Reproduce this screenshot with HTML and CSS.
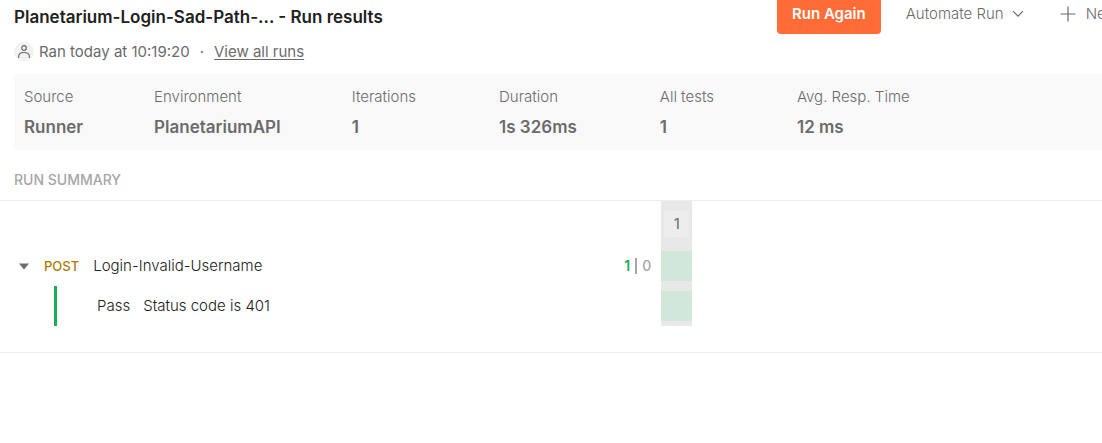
FILE: index.html
```html
<!DOCTYPE html>
<html lang="en">
<head>
<meta charset="utf-8">
<meta name="viewport" content="width=device-width, initial-scale=1">
<title>Run results</title>
<link rel="stylesheet" href="styles.css">
</head>
<body>
<header class="header">
  <h1 class="title">Planetarium-Login-Sad-Path-... - Run results</h1>
  <div class="actions">
    <button class="btn btn-primary" type="button">Run Again</button>
    <button class="btn btn-automate" type="button">Automate Run
      <svg width="12" height="8" viewBox="0 0 12 8" fill="none" stroke="currentColor" stroke-width="1.2" aria-hidden="true"><path d="M1 1.2l5 5 5-5"/></svg>
    </button>
    <button class="btn btn-new" type="button">
      <svg width="16" height="16" viewBox="0 0 16 16" fill="none" stroke="currentColor" stroke-width="1.2" aria-hidden="true"><path d="M8 .5v15M.5 8h15"/></svg>
      New Run
    </button>
  </div>
</header>

<div class="meta">
  <span class="avatar">
    <svg width="14" height="16" viewBox="0 0 14 16" fill="none" stroke="currentColor" stroke-width="1.2" aria-hidden="true"><circle cx="7" cy="4" r="2.3"/><path d="M1.600 14v-1.200c0-2.900 2-4.300 5.400-4.300s5.400 1.400 5.400 4.300v1.200"/></svg>
  </span>
  <span>Ran today at 10:19:20</span>
  <span class="dot">·</span>
  <a class="link" href="#runs">View all runs</a>
</div>

<dl class="stats">
  <div class="stat stat-text"><dt>Source</dt><dd>Runner</dd></div>
  <div class="stat stat-text"><dt>Environment</dt><dd>PlanetariumAPI</dd></div>
  <div class="stat"><dt>Iterations</dt><dd>1</dd></div>
  <div class="stat"><dt>Duration</dt><dd>1s 326ms</dd></div>
  <div class="stat"><dt>All tests</dt><dd>1</dd></div>
  <div class="stat"><dt>Avg. Resp. Time</dt><dd>12 ms</dd></div>
</dl>

<h2 class="section-title">RUN SUMMARY</h2>

<main class="summary">
  <div class="requests">
    <div class="request">
      <button class="toggle" type="button" aria-label="Collapse request" aria-expanded="true">
        <svg width="10" height="7" viewBox="0 0 10 7" fill="currentColor" aria-hidden="true"><path d="M0 .5h10L5 6.500z"/></svg>
      </button>
      <span class="method">POST</span>
      <span class="name">Login-Invalid-Username</span>
      <span class="counts"><span class="passed">1</span><span class="divider"></span><span>0</span></span>
    </div>
    <div class="test"><span>Pass</span><span>Status code is 401</span></div>
  </div>
  <div class="iteration">
    <div class="iteration-head"><button class="iteration-number" type="button">1</button></div>
    <div class="cell"></div>
    <div class="cell"></div>
  </div>
</main>
</body>
</html>
```
FILE: styles.css
```css
* {
  box-sizing: border-box;
}

body {
  margin: 0;
  overflow-x: hidden;
  background: #fff;
  color: #6b6b6b;
  font: 300 15px/20px Inter, "Liberation Sans", sans-serif;
}

button {
  padding: 0;
  border: 0;
  background: none;
  color: inherit;
  font: inherit;
}

.header {
  display: flex;
  justify-content: space-between;
  height: 34px;
  padding-left: 14px;
  overflow: hidden;
}

.title {
  margin: 0;
  padding-top: 7px;
  color: #212121;
  font-size: 17px;
  font-weight: 600;
  line-height: 20px;
  white-space: nowrap;
}

.actions {
  display: flex;
  flex: 0 0 325px;
  min-width: 0;
}

.btn {
  display: flex;
  flex: none;
  align-items: center;
  padding-bottom: 6px;
  white-space: nowrap;
}

.btn-primary {
  padding: 0 15px 6px;
  border-radius: 0 0 4px 4px;
  background: #ff6c37;
  color: #fff;
  font-weight: 600;
}

.btn-automate {
  gap: 8px;
  margin-left: 25px;
}

.btn-new {
  gap: 10px;
  margin-left: 36px;
}

.meta {
  display: flex;
  align-items: center;
  height: 36px;
  padding: 0 14px;
  font-weight: 400;
}

.avatar {
  display: flex;
  align-items: center;
  justify-content: center;
  width: 20px;
  height: 20px;
  margin-right: 5px;
  border-radius: 50%;
  background: #f2f2f2;
}

.dot {
  margin: 0 10px;
}

.link {
  color: inherit;
  text-underline-offset: 2px;
}

.stats {
  display: flex;
  gap: 83px;
  margin: 4px 0 0 14px;
  padding: 12px 10px 11px;
  background: #f9f9f9;
  white-space: nowrap;
}

.stat-text {
  margin-right: -12px;
}

.stats dt {
  line-height: 22px;
}

.stats dd {
  margin: 7px 0 0;
  font-size: 17px;
  font-weight: 600;
  line-height: 24px;
}

.section-title {
  margin: 0;
  padding: 20px 14px 10px;
  color: #a6a6a6;
  font-size: 14px;
  font-weight: 500;
  line-height: 20px;
}

.summary {
  display: flex;
  padding-bottom: 26px;
  border: solid #ededed;
  border-width: 1px 0;
}

.requests {
  flex: 0 0 60%;
  padding-top: 45px;
  color: #212121;
}

.request {
  display: flex;
  align-items: center;
  height: 40px;
  padding: 0 10px 0 19px;
}

.toggle {
  display: flex;
  color: #6b6b6b;
}

.method {
  margin: 0 14px 0 15px;
  color: #ad7a03;
  font-size: 13px;
  font-weight: 500;
}

.counts {
  display: flex;
  align-items: center;
  gap: 5px;
  margin-left: auto;
  color: #a6a6a6;
  font-size: 14px;
  font-weight: 500;
}

.passed {
  color: #1bac55;
  font-weight: 600;
}

.divider {
  width: 2px;
  height: 16px;
  background: #a6a6a6;
}

.test {
  display: flex;
  align-items: center;
  gap: 13px;
  height: 40px;
  margin-left: 54px;
  padding-left: 40px;
  border-left: 3px solid #1bac55;
}

.iteration {
  width: 31px;
  background: #e8e8e8;
}

.iteration-head {
  display: flex;
  align-items: center;
  justify-content: center;
  height: 45px;
}

.iteration-number {
  width: 25px;
  height: 26px;
  border-radius: 3px;
  background: #ededed;
  font-weight: 400;
}

.cell {
  height: 30px;
  margin: 5px 0 10px;
  background: #d1e7da;
}

.cell + .cell {
  margin-bottom: 5px;
}
```
